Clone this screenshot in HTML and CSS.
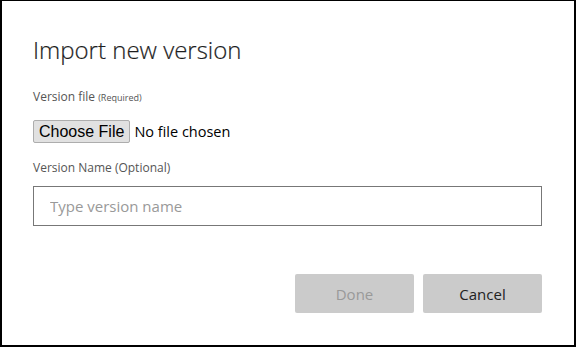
FILE: index.html
```html
<!DOCTYPE html>
<html lang="en">
<head>
    <meta charset="UTF-8">
    <title>Import new version</title>
    <link rel="stylesheet" href="styles.css">
</head>
<body>
    <div class="dialog">
        <h1 class="dialog-title">Import new version</h1>

        <label class="field-label" for="versionFile">Version file <span class="hint">(Required)</span></label>
        <div class="file-row">
            <button type="button" class="file-button" id="versionFile">Choose File</button>
            <span class="file-status">No file chosen</span>
        </div>

        <label class="field-label second" for="versionName">Version Name (Optional)</label>
        <input type="text" class="text-input" id="versionName" placeholder="Type version name">

        <div class="actions">
            <button type="button" class="action-button done" disabled>Done</button>
            <button type="button" class="action-button cancel">Cancel</button>
        </div>
    </div>
</body>
</html>
```

FILE: styles.css
```css
body {
    margin: 0;
    padding: 0;
    background-color: #fff;
    font-family: "Open Sans", "Noto Sans", sans-serif;
    color: #333;
}
.dialog {
    box-sizing: border-box;
    width: 576px;
    height: 347px;
    border: 2px solid #000;
    border-top-width: 1px;
    padding: 0 32px 0 31px;
    display: flex;
    flex-direction: column;
}
.dialog-title {
    margin: 34px 0 0 0;
    font-size: 24px;
    font-weight: 300;
    line-height: 30px;
    color: #1e1e1e;
    -webkit-text-stroke: 0.2px #1e1e1e;
}
.field-label {
    display: block;
    margin-top: 24px;
    font-size: 12px;
    line-height: 16px;
    color: #555;
}
.field-label.second {
    margin-top: 17px;
}
.hint {
    font-size: 9px;
}
.file-row {
    display: flex;
    align-items: center;
    margin-top: 14px;
    height: 23px;
}
.file-button {
    height: 23px;
    padding: 0 5px;
    margin: 0;
    border: 1px solid #adadad;
    border-radius: 2px;
    background-color: #e1e1e1;
    font-family: "Liberation Sans", Arial, sans-serif;
    font-size: 16px;
    color: #000;
}
.file-status {
    margin-left: 4px;
    font-size: 14.5px;
    color: #000;
}
.text-input {
    box-sizing: border-box;
    width: 100%;
    height: 40px;
    margin-top: 10px;
    padding: 0 16px;
    border: 1px solid #777;
    border-radius: 0;
    font-family: "Open Sans", "Noto Sans", sans-serif;
    font-size: 15px;
    color: #333;
}
.text-input::placeholder {
    color: #999;
}
.actions {
    display: flex;
    justify-content: flex-end;
    gap: 9px;
    margin-top: 48px;
}
.action-button {
    width: 119px;
    height: 39px;
    border: none;
    border-radius: 2px;
    background-color: #cbcbcb;
    font-family: "Open Sans", "Noto Sans", sans-serif;
    font-size: 15px;
    font-weight: 400;
    color: #222;
}
.action-button.done {
    color: #999;
}
```
